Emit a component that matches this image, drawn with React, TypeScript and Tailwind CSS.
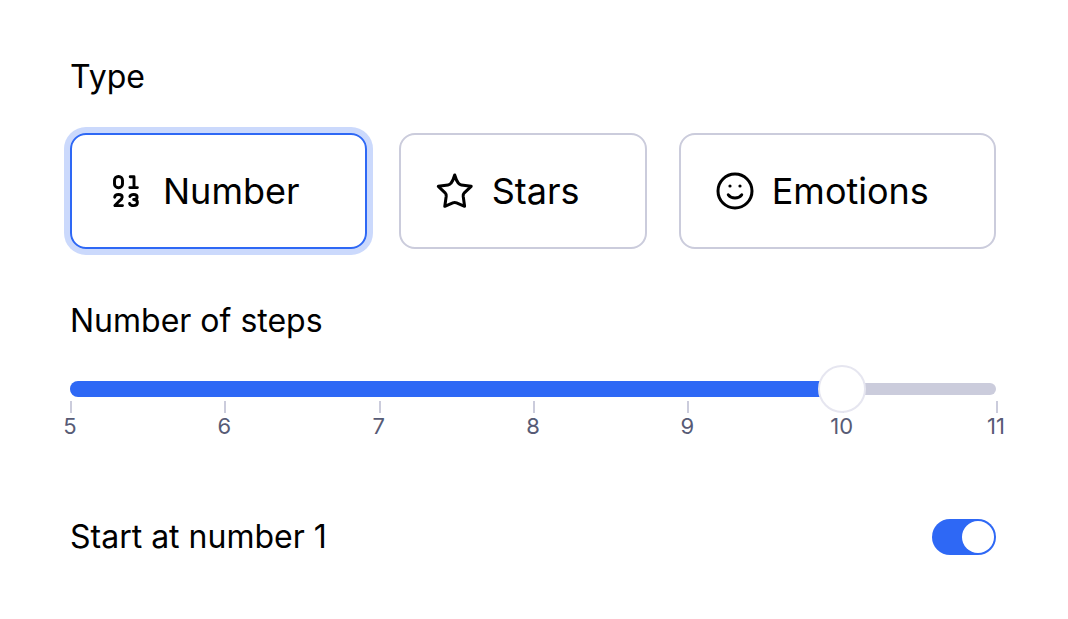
import { useState, type ReactNode } from "react";

function DigitsIcon() {
  return (
    <svg viewBox="0 0 40 40" className="size-10" fill="none" stroke="currentColor" strokeWidth="2.9" strokeLinecap="round" strokeLinejoin="round" aria-hidden="true">
      <rect x="8.500" y="5.500" width="8" height="11.200" rx="3.800" />
      <path d="M24.200 5.800h3.800v10.600M23.800 16.600h7.600" />
      <path d="M8.700 26.200c.2-1.700 1.700-2.700 3.800-2.700s3.700 1 3.700 2.700c0 1.500-1.200 2.500-2.900 3.800L8.900 34.600h7.600" />
      <path d="M23.900 25.400c.6-1.300 2-1.900 3.700-1.900 2.200 0 3.500 1 3.500 2.500s-1.300 2.500-3.500 2.500c2.400 0 3.800 1.200 3.800 3s-1.500 3.100-3.900 3.100c-2 0-3.400-.8-3.900-2.200" />
    </svg>
  );
}

function StarIcon() {
  return (
    <svg viewBox="0 0 40 40" className="size-10" fill="none" stroke="currentColor" strokeWidth="3" strokeLinecap="round" strokeLinejoin="round" aria-hidden="true">
      <path d="M19.700 4Q21.200 9.400 23.400 12.200Q24.400 13.600 26.300 13.900L36.200 15.300 29.300 21.800Q28 23.200 28.200 25.200L29.600 35.300 21.600 31.900Q19.700 31.100 17.800 31.900L9.800 35.300 11.200 25.200Q11.400 23.200 10.100 21.800L3.300 15.300 13.100 13.900Q15 13.600 16 12.200Q18.200 9.400 19.700 4Z" />
    </svg>
  );
}

function SmileIcon() {
  return (
    <svg viewBox="0 0 40 40" className="size-10" fill="none" stroke="currentColor" strokeWidth="3" strokeLinecap="round" aria-hidden="true">
      <circle cx="20" cy="20" r="17" />
      <path d="M13.300 23.800c3.300 4.300 10.100 4.300 13.400 0" />
      <circle cx="15" cy="15" r="1.600" fill="currentColor" stroke="none" />
      <circle cx="25" cy="15" r="1.600" fill="currentColor" stroke="none" />
    </svg>
  );
}

const types: { name: string; icon: ReactNode }[] = [
  { name: "Number", icon: <DigitsIcon /> },
  { name: "Stars", icon: <StarIcon /> },
  { name: "Emotions", icon: <SmileIcon /> },
];

const MIN = 5;
const MAX = 11;
const marks = [5, 6, 7, 8, 9, 10, 11];

export default function App() {
  const [type, setType] = useState("Number");
  const [steps, setSteps] = useState(10);
  const [startAtOne, setStartAtOne] = useState(true);

  return (
    <main className="min-h-screen bg-white pt-[57px] pr-[72px] pb-14 pl-[70px] font-['Inter',sans-serif] text-[32px] leading-10 text-black">
      <h2 id="type-label">Type</h2>
      <div role="group" aria-labelledby="type-label" className="mt-9 flex gap-8">
        {types.map(({ name, icon }) => (
          <button
            key={name}
            type="button"
            aria-pressed={type === name}
            onClick={() => setType(name)}
            className={
              "flex h-[116px] flex-auto items-center gap-[17px] rounded-2xl border-2 px-[34px] text-[36px] " +
              (type === name ? "border-[#2e68f5] ring-6 ring-[#cbd9fc]" : "border-[#cbccdc]")
            }
          >
            {icon}
            {name}
          </button>
        ))}
      </div>

      <label htmlFor="steps" className="mt-[52px] block">Number of steps</label>
      <div className="mt-6 grid items-center">
        <div className="col-start-1 row-start-1 h-3 rounded-full bg-[#cbccdc]" />
        <div
          className="col-start-1 row-start-1 h-4 rounded-l-full bg-[#2e68f5]"
          style={{ width: `${((steps - MIN) / (MAX - MIN)) * 100}%` }}
        />
        <input
          id="steps"
          type="range"
          min={MIN}
          max={MAX}
          value={steps}
          onChange={(e) => setSteps(Number(e.target.value))}
          className="z-10 col-start-1 row-start-1 -mx-6 h-12 cursor-pointer appearance-none bg-transparent [&::-webkit-slider-thumb]:size-12 [&::-webkit-slider-thumb]:appearance-none [&::-webkit-slider-thumb]:rounded-full [&::-webkit-slider-thumb]:border-2 [&::-webkit-slider-thumb]:border-[#e6e6f0] [&::-webkit-slider-thumb]:bg-white"
        />
      </div>
      <div className="-mt-3 flex justify-between text-[22px] leading-[26px] text-[#575b75]">
        {marks.map((mark) => (
          <div key={mark} className="flex w-0 flex-col items-center">
            <span className="h-3 w-0.5 shrink-0 self-start bg-[#cbccdc]" />
            <span>{mark}</span>
          </div>
        ))}
      </div>

      <div className="mt-[78px] flex items-center justify-between">
        <label htmlFor="start">Start at number 1</label>
        <input
          id="start"
          type="checkbox"
          role="switch"
          checked={startAtOne}
          onChange={(e) => setStartAtOne(e.target.checked)}
          className="flex h-9 w-16 cursor-pointer appearance-none rounded-full bg-[#cbccdc] p-0.5 before:size-8 before:rounded-full before:bg-white checked:justify-end checked:bg-[#2e68f5]"
        />
      </div>
    </main>
  );
}
